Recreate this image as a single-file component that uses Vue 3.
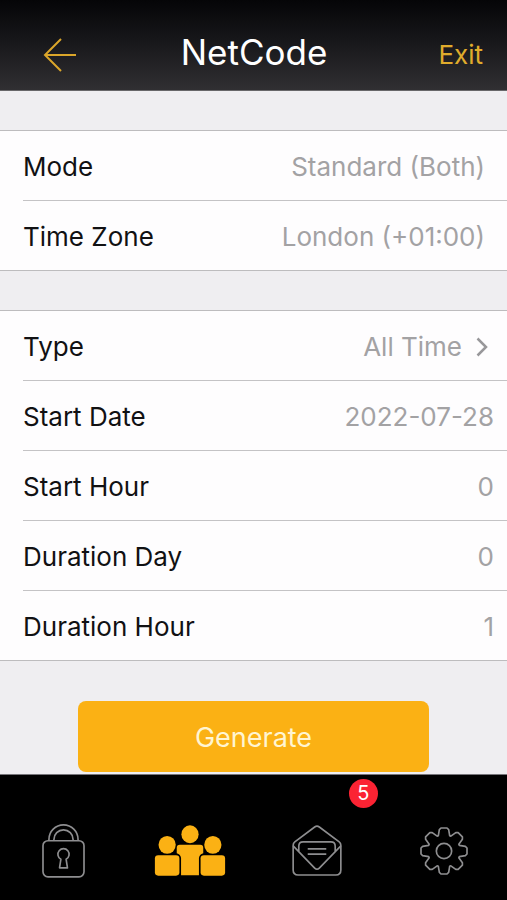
<template>
  <div class="screen">
    <header class="header">
      <button class="header__back" type="button" aria-label="Back">
        <svg viewBox="0 0 34 34" width="34" height="34">
          <path d="M18 1 L2 17 L18 33 M2 17 H33" />
        </svg>
      </button>
      <h1 class="header__title">NetCode</h1>
      <button class="header__exit" type="button">Exit</button>
    </header>

    <main class="content">
      <section class="group">
        <div v-for="item in info" :key="item.label" class="row">
          <span class="row__label">{{ item.label }}</span>
          <span class="row__value">{{ item.value }}</span>
        </div>
      </section>

      <section class="group">
        <button class="row row--link" type="button">
          <span class="row__label">Type</span>
          <span class="row__value">All Time</span>
          <svg class="row__chevron" viewBox="0 0 12 20" width="12" height="20">
            <path d="M1.5 1.5 L10 10 L1.5 18.5" />
          </svg>
        </button>
        <div v-for="field in fields" :key="field.id" class="row row--field">
          <label class="row__label" :for="field.id">{{ field.label }}</label>
          <input :id="field.id" v-model="field.value" class="row__input" type="text" />
        </div>
      </section>

      <button class="generate" type="button">Generate</button>
    </main>

    <nav class="tabs">
      <a class="tabs__item" href="#locks" aria-label="Locks">
        <svg class="icon" viewBox="0 0 130 162" width="43" height="54">
          <rect x="3" y="50" width="124" height="109" rx="15" />
          <path d="M21 50 V46 A44 44 0 0 1 109 46 V50" />
          <path d="M36 50 V46 A29 29 0 0 1 94 46 V50" />
          <path d="M57 106 A17 17 0 1 1 73 106 L77 132 H53 Z" />
        </svg>
      </a>
      <a class="tabs__item" href="#people" aria-label="People">
        <svg class="icon icon--active" viewBox="0 0 216 154" width="72" height="51">
          <ellipse cx="108" cy="28" rx="26" ry="27" />
          <ellipse cx="39" cy="60" rx="26" ry="27" />
          <ellipse cx="177" cy="60" rx="26" ry="27" />
          <path d="M77 60 H139 Q148 60 148 69 V85 Q136 88 135 100 V152 H81 V100 Q80 88 68 85 V69 Q68 60 77 60 Z" />
          <rect x="2" y="91" width="74" height="62" rx="10" />
          <rect x="140" y="91" width="74" height="62" rx="10" />
        </svg>
      </a>
      <a class="tabs__item" href="#messages" aria-label="Messages, 5 new">
        <svg class="icon" viewBox="0 0 150 154" width="50" height="51">
          <path d="M3 61 Q3 55 8 51 L68 6 Q75 1 82 6 L142 51 Q147 55 147 61 V136 Q147 151 132 151 H18 Q3 151 3 136 Z" />
          <path d="M3 63 L68 130 Q75 137 82 130 L147 63" />
          <path d="M20 79 V64 Q20 51 33 51 H117 Q130 51 130 64 V79" />
          <path d="M47 72 H103 M47 88 H103" />
        </svg>
        <span class="tabs__badge">5</span>
      </a>
      <a class="tabs__item" href="#settings" aria-label="Settings">
        <svg class="icon" viewBox="-72 -72 144 144" width="48" height="48">
          <path :d="gearPath" />
          <circle r="23" />
        </svg>
      </a>
    </nav>
  </div>
</template>

<script setup>
import { ref } from 'vue'

const info = [
  { label: 'Mode', value: 'Standard (Both)' },
  { label: 'Time Zone', value: 'London (+01:00)' },
]

const fields = ref([
  { id: 'start-date', label: 'Start Date', value: '2022-07-28' },
  { id: 'start-hour', label: 'Start Hour', value: '0' },
  { id: 'duration-day', label: 'Duration Day', value: '0' },
  { id: 'duration-hour', label: 'Duration Hour', value: '1' },
])

// One tooth, repeated every 45 degrees
const tooth = [
  [-17, -46],
  [-14, -64],
  [-9, -69],
  [9, -69],
  [14, -64],
  [17, -46],
]

const points = Array.from({ length: 8 }, (_, i) => {
  const angle = (i * Math.PI) / 4
  const cos = Math.cos(angle)
  const sin = Math.sin(angle)
  return tooth.map(([x, y]) => `${(x * cos - y * sin).toFixed(1)} ${(x * sin + y * cos).toFixed(1)}`)
}).flat()

const gearPath = `M${points.join('L')}Z`
</script>

<style>
body {
  margin: 0;
  background: #efeef1;
}
</style>

<style scoped>
.screen {
  display: flex;
  flex-direction: column;
  min-height: 100vh;
  background: #efeef1;
  font-family: Inter, 'Liberation Sans', sans-serif;
  font-size: 26px;
  line-height: 32px;
  color: #111113;
}

button {
  padding: 0;
  border: 0;
  background: none;
  font: inherit;
  cursor: pointer;
}

/* Header */
.header {
  display: grid;
  grid-template-columns: 1fr auto 1fr;
  align-items: center;
  box-sizing: border-box;
  height: 91px;
  padding: 14px 24px 0 43px;
  border-bottom: 1px solid #68676a;
  background: linear-gradient(#050507, #17171a 45%, #302f32);
}

.header__back {
  display: flex;
  justify-self: start;
  padding-top: 6px;
}

.header__back svg {
  fill: none;
  stroke: #dba62a;
  stroke-width: 2;
}

.header__title {
  margin: 0;
  padding-right: 18px;
  font-size: 35px;
  font-weight: 400;
  line-height: 40px;
  color: #fff;
}

.header__exit {
  justify-self: end;
  padding-top: 6px;
  color: #e0ac2c;
}

/* Lists */
.content {
  display: flex;
  flex: 1;
  flex-direction: column;
  padding-bottom: 2px;
}

.group {
  margin-top: 39px;
  padding-left: 23px;
  border-top: 1px solid #bdbcbe;
  border-bottom: 1px solid #bdbcbe;
  background: #fefdfe;
}

.row {
  display: flex;
  align-items: center;
  justify-content: space-between;
  box-sizing: border-box;
  width: 100%;
  height: 70px;
  padding: 2px 22px 0 0;
  border-bottom: 1px solid #c4c3c5;
}

.row:last-child {
  height: 69px;
  border-bottom: 0;
}

.row--link {
  padding-right: 19px;
  color: inherit;
}

.row--field {
  padding-right: 13px;
}

.row__label {
  flex: none;
}

.row__value {
  margin-left: auto;
  color: #a3a2a4;
}

.row__chevron {
  margin-left: 14px;
  fill: none;
  stroke: #98979a;
  stroke-width: 2.5;
}

.row__input {
  flex: 1;
  min-width: 0;
  padding: 0;
  border: 0;
  outline: 0;
  background: none;
  font: inherit;
  text-align: right;
  color: #a3a2a4;
}

.generate {
  height: 71px;
  margin: 40px 78px 0;
  padding-top: 2px;
  border-radius: 8px;
  background: #fbb114;
  font-size: 27px;
  color: #fff5d2;
}

/* Tab bar */
.tabs {
  display: grid;
  grid-template-columns: repeat(4, 1fr);
  box-sizing: border-box;
  height: 126px;
  border-top: 1px solid #77757a;
  background: #000;
}

.tabs__item {
  position: relative;
  display: flex;
  align-items: center;
  justify-content: center;
  padding-top: 26px;
}

.icon {
  fill: none;
  stroke: #8e8e90;
  stroke-width: 5;
  stroke-linejoin: round;
}

.icon--active {
  fill: #fbb114;
  stroke: none;
}

.tabs__badge {
  position: absolute;
  top: 4px;
  left: calc(50% + 32px);
  width: 29px;
  height: 29px;
  border-radius: 50%;
  background: #fb2333;
  font-size: 20px;
  line-height: 29px;
  text-align: center;
  color: #fff;
}
</style>
